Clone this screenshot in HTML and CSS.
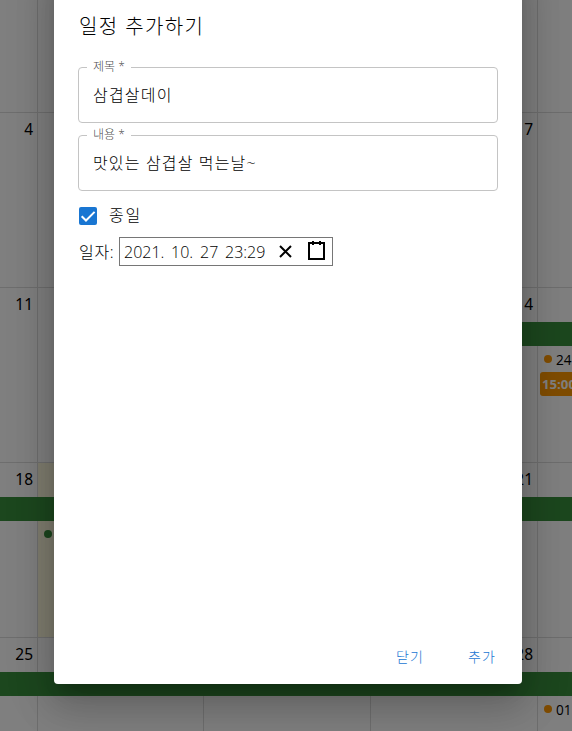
FILE: index.html
```html
<!DOCTYPE html>
<html lang="ko">
<head>
<meta charset="utf-8">
<title>일정 추가하기</title>
<link rel="stylesheet" href="styles.css">
</head>
<body>
<main class="calendar">
  <div class="day"></div><div class="day"></div><div class="day"></div><div class="day"></div><div class="day"></div>
  <div class="day"><span class="num">4</span></div><div class="day"></div><div class="day"></div><div class="day"><span class="num">7</span></div><div class="day"></div>
  <div class="day"><span class="num">11</span></div><div class="day"></div><div class="day"></div><div class="day"><span class="num">14</span><div class="bar"></div></div>
  <div class="day"><div class="bar"></div><div class="event"><i class="dot orange"></i>24</div><div class="chip">15:00</div></div>
  <div class="day"><span class="num">18</span><div class="bar"></div></div><div class="day today"><div class="bar"></div><div class="event"><i class="dot"></i></div></div><div class="day"><div class="bar"></div></div><div class="day"><span class="num">21</span><div class="bar"></div></div><div class="day"><div class="bar"></div></div>
  <div class="day"><span class="num">25</span><div class="bar"></div></div><div class="day"><div class="bar"></div></div><div class="day"><div class="bar"></div></div><div class="day"><span class="num">28</span><div class="bar"></div></div>
  <div class="day"><div class="bar"></div><div class="event"><i class="dot orange"></i>01</div></div>
</main>
<div class="backdrop">
  <section class="dialog" role="dialog">
    <h2 class="title">일정 추가하기</h2>
    <fieldset class="field"><legend>제목 *</legend><div class="value">삼겹살데이</div></fieldset>
    <fieldset class="field"><legend>내용 *</legend><div class="value content">맛있는 삼겹살 먹는날~</div></fieldset>
    <div class="check-row">
      <svg class="check" viewBox="0 0 18 18"><rect width="18" height="18" rx="2" fill="#1976d2"/><path d="M2.7 9.2 7 13.5 15.6 4.9" fill="none" stroke="#fff" stroke-width="2"/></svg>
      <span class="check-label">종일</span>
    </div>
    <div class="date-row">
      <span class="date-label">일자:</span>
      <div class="picker">
        <span class="date year">2021.</span><span class="date month">10.</span><span class="date">27</span><span class="date time">23:29</span>
        <svg class="clear" viewBox="0 0 19 19"><path d="M4 4 15 15M15 4 4 15" stroke="#000" stroke-width="2"/></svg>
        <svg class="cal" viewBox="0 0 19 19"><path d="M2 2H17V18H2Z" fill="none" stroke="#000" stroke-width="2"/><path d="M6 0V4M13 0V4" stroke="#000" stroke-width="2"/></svg>
      </div>
    </div>
    <footer class="actions"><button>닫기</button><button>추가</button></footer>
  </section>
</div>
</body>
</html>
```
FILE: styles.css
```css
* { box-sizing: border-box; }
body {
  margin: 0;
  height: 731px;
  overflow: hidden;
  background: #fff;
  font-family: "Open Sans", "Noto Sans CJK KR", sans-serif;
  color: rgba(0, 0, 0, .87);
}
.calendar {
  display: grid;
  grid-template-columns: 38px 166px 167px 167px 35px;
  grid-template-rows: 112px repeat(3, 175px) 94px;
  height: 731px;
  overflow: hidden;
}
.day {
  display: grid;
  grid-template-columns: 100%;
  grid-template-rows: 34px 24px 26px 24px;
  align-content: start;
  min-width: 0;
  border-top: 1px solid #ddd;
  border-right: 1px solid #ddd;
}
.day:nth-child(-n+5) { border-top: 0; }
.today { background: rgba(255, 220, 40, .15); }
.num {
  grid-row: 1;
  padding: 4px 4px 0 0;
  text-align: right;
  font-family: "Noto Sans", sans-serif;
  font-size: 15.5px;
  line-height: 24px;
  color: #000;
}
.bar { grid-row: 2; background: #388e3c; margin-right: -1px; }
.event {
  grid-row: 3;
  display: flex;
  align-items: center;
  gap: 4px;
  padding-left: 6px;
  white-space: nowrap;
  font-size: 13.6px;
  color: #000;
}
.dot { flex: none; width: 8px; height: 8px; border-radius: 50%; background: #388e3c; }
.orange { background: #ff9800; }
.chip {
  grid-row: 4;
  margin: 0 -10px 0 2px;
  padding-left: 2px;
  border-radius: 3px;
  background: #ff9800;
  color: #fff;
  font-size: 13.2px;
  font-weight: 700;
  line-height: 25px;
}
.backdrop {
  position: absolute;
  inset: 0;
  overflow: hidden;
  background: rgba(0, 0, 0, .5);
}
.dialog {
  display: flex;
  flex-direction: column;
  width: 468px;
  height: 724px;
  margin: -40px 0 0 54px;
  padding: 40px 24px 10px;
  border-radius: 4px;
  background: #fff;
  color: #000;
  font-weight: 300;
  box-shadow: 0 11px 15px -7px rgba(0,0,0,.2), 0 24px 38px 3px rgba(0,0,0,.14), 0 9px 46px 8px rgba(0,0,0,.12);
}
.title {
  height: 60px;
  margin: 0;
  padding: 11px 0 0 1px;
  font-size: 20px;
  font-weight: 300;
  line-height: 32px;
  letter-spacing: 1.4px;
}
.field {
  height: 63px;
  margin: 0 0 5px;
  padding: 0 14px;
  border: 1px solid #c4c4c4;
  border-radius: 4px;
  min-width: 0;
}
.field legend {
  height: 15px;
  margin-left: -6px;
  padding: 0 6px;
  font-size: 12px;
  line-height: 13px;
  color: rgba(0, 0, 0, .75);
}
.value { font-size: 16px; line-height: 24px; padding-top: 8px; letter-spacing: 1.2px; }
.content { letter-spacing: 1.15px; }
.check-row { display: flex; align-items: center; height: 40px; padding-left: 1px; }
.check { width: 18px; height: 18px; margin-right: 12px; }
.check-label { margin-top: -2px; font-size: 16px; line-height: 24px; letter-spacing: 1.8px; }
.date-row { display: flex; align-items: center; height: 29px; margin-top: 1px; padding-left: 1px; }
.date-label { width: 40px; margin-top: -1px; font-size: 16px; letter-spacing: .7px; white-space: nowrap; }
.picker {
  display: flex;
  align-items: center;
  width: 214px;
  height: 29px;
  padding: 0 0 0 4px;
  border: 1px solid #767676;
  font-size: 16px;
  white-space: nowrap;
}
.date { flex: none; width: 25px; }
.year { width: 47px; }
.month { width: 29px; }
.time { width: 51px; }
.clear { width: 19px; height: 19px; }
.cal { width: 19px; height: 19px; margin: -2px 0 0 12px; }
.actions { display: flex; justify-content: flex-end; gap: 8px; margin: auto -16px 0 0; }
.actions button {
  width: 64px;
  height: 36px;
  padding: 0;
  border: 0;
  background: none;
  color: #1976d2;
  font: 300 14px/24px "Noto Sans CJK KR", sans-serif;
  letter-spacing: 1.2px;
}
```
